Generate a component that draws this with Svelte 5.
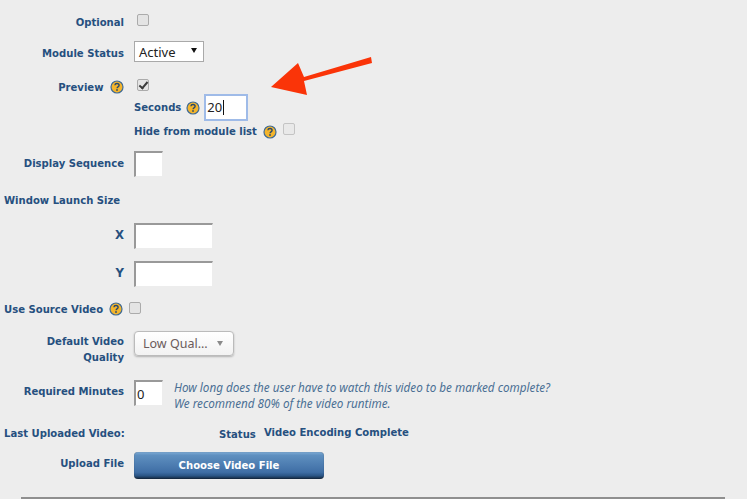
<script>
  // form rows are laid out by flow, only the red arrow sits on top
</script>

{#snippet help()}
  <svg class="help" width="14" height="14" viewBox="0 0 14 14" aria-hidden="true">
    <circle cx="7" cy="7" r="6" fill="#f4b52c" stroke="#3f6a94" stroke-width="1.2" />
    <path d="M4.9 5.3c.1-1.2 1-1.8 2.1-1.8 1.2 0 2.1.7 2.1 1.8 0 .9-.6 1.3-1.1 1.6-.6.4-.9.6-.9 1.3" fill="none" stroke="#27476b" stroke-width="1.4" />
    <rect x="6.2" y="9.2" width="1.6" height="1.6" fill="#27476b" />
  </svg>
{/snippet}

<main class="page">
  <svg class="arrow" width="110" height="45" viewBox="0 0 110 45" aria-hidden="true">
    <polygon points="1,37 28,13 34,27 101,7 102,13 34,31 37,45" fill="#fa3408" />
  </svg>

  <div class="row optional">
    <label class="lbl" for="opt">Optional</label>
    <input id="opt" class="check" type="checkbox" />
  </div>

  <div class="row status">
    <label class="lbl" for="st">Module Status</label>
    <div id="st" class="native-select">Active<span class="caret"></span></div>
  </div>

  <div class="row preview">
    <div class="lbl">Preview {@render help()}</div>
    <div class="stack">
      <input class="check checked" type="checkbox" checked />
      <div class="sub seconds">
        <span class="sub-lbl">Seconds</span>
        {@render help()}
        <div class="focus-input">20<span class="cursor"></span></div>
      </div>
      <div class="sub hide">
        <span class="sub-lbl">Hide from module list</span>
        {@render help()}
        <input class="check faint" type="checkbox" />
      </div>
    </div>
  </div>

  <div class="row sequence">
    <div class="lbl">Display Sequence</div>
    <div class="inset small"></div>
  </div>

  <div class="window-title">Window Launch Size</div>

  <div class="row x">
    <div class="lbl big">X</div>
    <div class="inset wide"></div>
  </div>

  <div class="row y">
    <div class="lbl big">Y</div>
    <div class="inset wide"></div>
  </div>

  <div class="source">
    <span>Use Source Video</span>
    {@render help()}
    <input class="check" type="checkbox" />
  </div>

  <div class="row quality">
    <div class="lbl">Default Video<br />Quality</div>
    <div class="pretty-select">Low Qual...<span class="caret2"></span></div>
  </div>

  <div class="row minutes">
    <div class="lbl">Required Minutes</div>
    <div class="inset small value">0</div>
    <p class="hint">How long does the user have to watch this video to be marked complete?<br />We recommend 80% of the video runtime.</p>
  </div>

  <div class="last">
    <span class="last-lbl">Last Uploaded Video:</span>
    <span class="status-lbl">Status</span>
    <span class="status-val">Video Encoding Complete</span>
  </div>

  <div class="row upload">
    <div class="lbl">Upload File</div>
    <button class="upload-btn">Choose Video File</button>
  </div>

  <hr />
</main>

<style>
  :global(body) {
    margin: 0;
    background: #ededed;
  }

  .page {
    position: relative;
    width: 747px;
    height: 499px;
    overflow: hidden;
    box-sizing: border-box;
    padding-top: 13px;
    font-family: "DejaVu Sans", "Noto Sans", sans-serif;
    font-stretch: condensed;
    font-size: 11.2px;
    font-weight: 700;
    color: #26507f;
  }

  .arrow {
    position: absolute;
    left: 270px;
    top: 50px;
  }

  .row {
    display: flex;
    align-items: flex-start;
    gap: 10px;
  }

  .lbl {
    width: 124px;
    flex: none;
    text-align: right;
    line-height: 17px;
    white-space: nowrap;
  }

  .lbl.big {
    font-size: 13px;
    line-height: 24px;
  }

  .help {
    vertical-align: -3px;
    margin-left: 3px;
  }

  .check {
    appearance: none;
    width: 12px;
    height: 12px;
    margin: 1px 0 0 3px;
    box-sizing: border-box;
    border: 1px solid #ababab;
    border-radius: 2px;
    background: #e4e4e4;
    position: relative;
  }

  .check.faint {
    border-color: #c4c4c4;
    background: #e9e9e9;
    margin: -5px 0 0 0;
  }

  .check.checked::after {
    content: "";
    position: absolute;
    left: 3px;
    top: 0;
    width: 3px;
    height: 7px;
    border: solid #3a3a3a;
    border-width: 0 2px 2px 0;
    transform: rotate(40deg);
  }

  .optional {
    height: 28px;
  }

  .optional .lbl {
    margin-top: 1px;
  }

  .status {
    height: 36px;
  }

  .status .lbl {
    margin-top: 4px;
  }

  .native-select {
    width: 70px;
    height: 21px;
    box-sizing: border-box;
    border: 1px solid #a9a9a9;
    background: #fff;
    color: #222;
    font-family: "Noto Sans", sans-serif;
    font-stretch: normal;
    font-weight: 400;
    font-size: 13px;
    line-height: 21px;
    padding-left: 4px;
    position: relative;
  }

  .caret {
    position: absolute;
    right: 6px;
    top: 6px;
    border-style: solid;
    border-width: 5px 3px 0;
    border-color: #111 transparent transparent;
  }

  .preview {
    height: 74px;
  }

  .preview .lbl {
    margin-top: 2px;
  }

  .stack {
    display: flex;
    flex-direction: column;
    align-items: flex-start;
  }

  .preview .check.checked {
    margin-top: 2px;
  }

  .sub {
    display: flex;
    align-items: center;
    white-space: nowrap;
  }

  .seconds {
    height: 27px;
    margin-top: 3px;
  }

  .seconds .help {
    margin: 0 4px 0 5px;
  }

  .focus-input {
    width: 44px;
    height: 27px;
    box-sizing: border-box;
    border: 2px solid #9fbbe8;
    background: #fff;
    color: #222;
    font-family: "Noto Sans", sans-serif;
    font-stretch: normal;
    font-weight: 400;
    font-size: 13px;
    line-height: 23px;
    padding-left: 1px;
    display: flex;
    align-items: center;
  }

  .cursor {
    width: 1px;
    height: 15px;
    background: #111;
    margin-left: 1px;
  }

  .hide {
    height: 17px;
    margin-top: 2px;
  }

  .hide .help {
    margin: 0 6px;
  }

  .inset {
    box-sizing: border-box;
    height: 26px;
    background: #fff;
    border-style: solid;
    border-color: #999 #ededed #ededed #999;
    border-width: 2px 1px 1px 2px;
  }

  .inset.small {
    width: 29px;
  }

  .inset.wide {
    width: 79px;
  }

  .inset.value {
    color: #222;
    font-family: "Noto Sans", sans-serif;
    font-stretch: normal;
    font-weight: 400;
    font-size: 13px;
    line-height: 24px;
    padding-left: 1px;
  }

  .sequence {
    height: 41px;
  }

  .sequence .lbl {
    margin-top: 4px;
  }

  .window-title {
    height: 31px;
    line-height: 17px;
    padding-left: 4px;
  }

  .x,
  .y {
    height: 38px;
  }

  .source {
    display: flex;
    align-items: center;
    height: 22px;
    margin-top: -1px;
    padding-left: 4px;
  }

  .source .help {
    margin: 0 6px;
  }

  .source .check {
    margin: -2px 0 0 0;
  }

  .quality {
    margin-top: 11px;
    height: 49px;
  }

  .quality .lbl {
    margin-top: 3px;
    line-height: 16px;
    white-space: normal;
  }

  .pretty-select {
    width: 100px;
    height: 25px;
    box-sizing: border-box;
    border: 1px solid #bbb;
    border-radius: 4px;
    background: linear-gradient(#fff, #f2f2f2);
    box-shadow: 0 1px 2px rgba(0, 0, 0, 0.25);
    color: #6b5b5b;
    font-family: "Noto Sans", sans-serif;
    font-stretch: normal;
    font-weight: 400;
    font-size: 12.5px;
    line-height: 24px;
    padding-left: 8px;
    position: relative;
  }

  .caret2 {
    position: absolute;
    right: 10px;
    top: 9px;
    border-style: solid;
    border-width: 5px 3.5px 0;
    border-color: #8a8a8a transparent transparent;
  }

  .minutes {
    height: 44px;
  }

  .minutes .lbl {
    margin-top: 3px;
  }

  .hint {
    margin: -1px 0 0 1px;
    font-family: "Noto Sans", sans-serif;
    font-stretch: normal;
    font-size: 11.7px;
    font-weight: 400;
    font-style: italic;
    line-height: 16px;
    color: #4a6f94;
    white-space: nowrap;
  }

  .last {
    display: flex;
    height: 28px;
    white-space: nowrap;
  }

  .last-lbl {
    width: 219px;
    flex: none;
    padding-left: 4px;
    box-sizing: border-box;
    line-height: 17px;
    margin-top: 1px;
  }

  .status-lbl {
    width: 45px;
    flex: none;
    line-height: 17px;
    margin-top: 2px;
  }

  .status-val {
    line-height: 17px;
    margin-top: 0;
  }

  .upload .lbl {
    margin-top: 3px;
  }

  .upload-btn {
    width: 190px;
    height: 27px;
    margin: 0;
    padding: 0;
    border: 0;
    border-radius: 4px;
    background: linear-gradient(#7facd6 0, #5f90c0 12%, #3f6ea5 75%, #2a5585 88%, #13253a 100%);
    box-shadow: inset 0 0 1px rgba(0, 0, 0, 0.5);
    color: #fff;
    font: inherit;
  }

  hr {
    position: absolute;
    left: 21px;
    top: 497px;
    width: 704px;
    margin: 0;
    border: 0;
    height: 2px;
    background: #8f8f8f;
  }
</style>
